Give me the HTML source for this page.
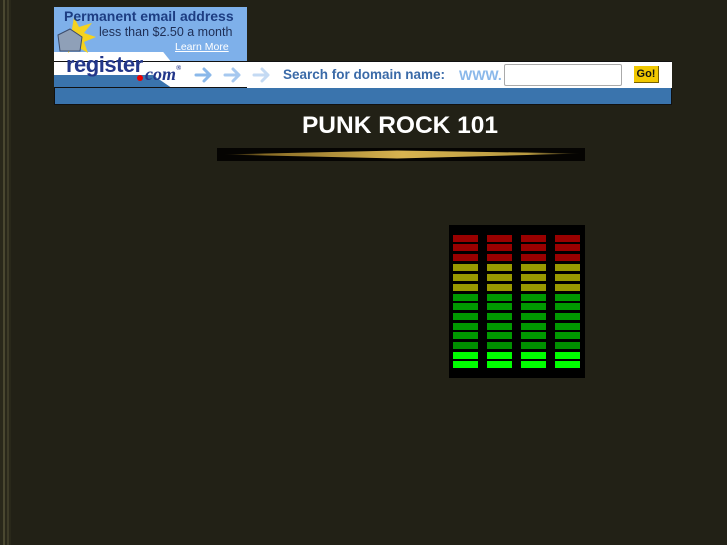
<!DOCTYPE html>
<html><head><style>
body{margin:0;width:727px;height:545px;background:#222116;position:relative;overflow:hidden;font-family:"Liberation Sans",Arial,sans-serif}
.a{position:absolute}
.bar{position:absolute;width:25px;height:7px}
</style></head><body>
<div class="a" style="left:0;top:0;width:11px;height:545px;background:#29281a"></div>
<div class="a" style="left:3px;top:0;width:2px;height:545px;background:#4a4830"></div>
<div class="a" style="left:7px;top:0;width:2px;height:545px;background:#3e3c28"></div>

<div class="a" style="left:54px;top:7px;width:193px;height:54px;background:#fff"></div>
<div class="a" style="left:54px;top:7px;width:193px;height:45px;background:#7eb0ea"></div>
<div class="a" style="left:160px;top:48px;width:87px;height:13px;background:#7eb0ea;clip-path:polygon(0 0,100% 0,100% 100%,12% 100%)"></div>
<svg class="a" style="left:54px;top:15px" width="45" height="40"><polygon points="20,2 25,12 38,8 30,18 42,22 30,27 34,38 22,31 14,38" fill="#f5d21e"/><path d="M4,20 L16,14 L28,22 L26,36 L6,36 Z" fill="#8fa0b8" stroke="#3d4c6a"/></svg>
<div class="a" style="left:64px;top:8px;font-size:14px;color:#1d3d82;font-weight:bold">Permanent email address</div>
<div class="a" style="left:99px;top:25px;font-size:12.5px;color:#1e2e55">less than $2.50 a month</div>
<div class="a" style="left:175px;top:41px;font-size:10.5px;color:#fff;text-decoration:underline">Learn More</div>

<div class="a" style="left:54px;top:61px;width:618px;height:27px;background:#fff;border-top:1px solid #111"></div>
<div class="a" style="left:54px;top:75px;width:190px;height:13px;background:#3a74ad;clip-path:polygon(0 0,52% 0,62% 100%,0 100%)"></div>
<div class="a" style="left:54px;top:87px;width:193px;height:1px;background:#111"></div>
<div class="a" style="left:66px;top:52px;font-size:22px;font-weight:bold;color:#23378a;letter-spacing:-0.5px">register</div>
<div class="a" style="left:137px;top:75px;width:6px;height:6px;border-radius:50%;background:#e00"></div>
<div class="a" style="left:145px;top:64px;font-size:18px;font-weight:bold;font-style:italic;color:#23378a;font-family:'Liberation Serif',serif">com<span style="font-size:7px;vertical-align:top">®</span></div>
<svg class="a" style="left:194px;top:66px" width="80" height="18" fill="none" stroke-width="3" stroke-linecap="round" stroke-linejoin="round"><path d="M2,9 H16 M10,3 L16,9 L10,15" stroke="#8ab8ea"/><path d="M31,9 H45 M39,3 L45,9 L39,15" stroke="#a6c8ef"/><path d="M60,9 H74 M68,3 L74,9 L68,15" stroke="#c4daf3"/></svg>
<div class="a" style="left:283px;top:67px;font-size:13.5px;font-weight:bold;color:#3a6aa8">Search for domain name:</div>
<div class="a" style="left:459px;top:67px;font-size:14px;font-weight:bold;color:#8ab8ea">WWW.</div>
<div class="a" style="left:504px;top:64px;width:116px;height:20px;border:1px solid #aaa;border-radius:2px;background:#fff"></div>
<div class="a" style="left:634px;top:66px;width:24px;height:16px;background:#f1c800;border-right:1px solid #776000;border-bottom:1px solid #776000;font-size:11px;font-weight:bold;color:#111;text-align:center;line-height:16px">Go!</div>

<div class="a" style="left:54px;top:88px;background:#3a74ad;border:1px solid #111;border-top:none;box-sizing:border-box;width:618px;height:17px"></div>

<div class="a" style="left:0;width:800px;top:112px;text-align:center;font-size:24.5px;font-weight:bold;color:#fff">PUNK ROCK 101</div>
<div class="a" style="left:217px;top:148px;width:368px;height:13px;background:#050402"></div>
<svg class="a" style="left:217px;top:148px" width="368" height="13"><defs><linearGradient id="g" x1="0" x2="1"><stop offset="0" stop-color="#000"/><stop offset="0.12" stop-color="#8a6d25"/><stop offset="0.5" stop-color="#d8b450"/><stop offset="0.85" stop-color="#b89a40"/><stop offset="1" stop-color="#000"/></linearGradient></defs><polygon points="5,6.5 180,2.5 365,5.5 180,10.5" fill="url(#g)"/></svg>

<div class="a" style="left:449px;top:225px;width:136px;height:153px;background:#000"></div>
<div id="eq"></div>
<script>
var ys=[235,244,254,264,274,284,294,303,313,323,332,342,352,361];
var cs=['#990000','#990000','#990000','#999900','#999900','#999900','#009900','#009900','#009900','#009900','#009900','#008f00','#00ff00','#00ff00'];
var xs=[453,487,521,555],h='';
ys.forEach(function(y,i){xs.forEach(function(x){h+='<div class="bar" style="left:'+x+'px;top:'+y+'px;background:'+cs[i]+'"></div>';});});
document.getElementById('eq').innerHTML=h;
</script>
</body></html>
